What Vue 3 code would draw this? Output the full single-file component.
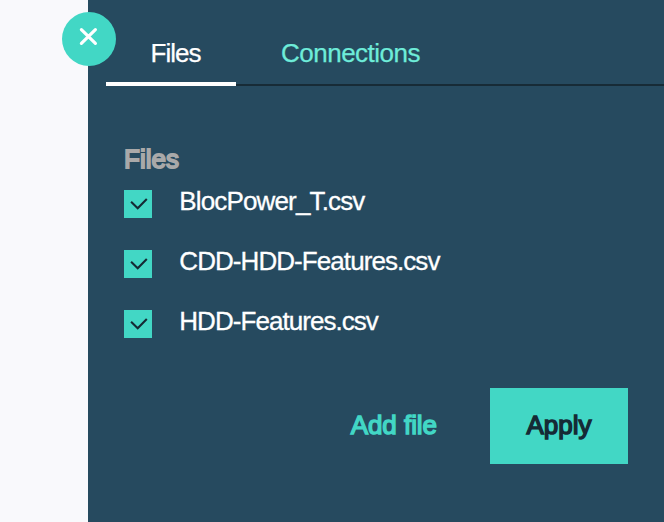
<script setup>
import { ref } from 'vue'

const tabs = ['Files', 'Connections']
const active = ref('Files')
const files = ref([
  { name: 'BlocPower_T.csv', checked: true, cls: 'bloc' },
  { name: 'CDD-HDD-Features.csv', checked: true, cls: 'cdd' },
  { name: 'HDD-Features.csv', checked: true, cls: 'hdd' },
])
</script>

<template>
  <div class="page">
    <aside class="panel">
      <button class="close" aria-label="Close">
        <svg width="54" height="54" viewBox="0 0 54 54">
          <path d="M19.4 17.6 L33.4 31.4 M33.4 17.6 L19.4 31.4" fill="none" stroke="#fff" stroke-width="3.2" stroke-linecap="round" />
        </svg>
      </button>
      <nav class="tabs">
        <button
          v-for="tab in tabs"
          :key="tab"
          class="tab"
          :class="[tab.toLowerCase(), { active: tab === active }]"
          @click="active = tab"
        ><span>{{ tab }}</span></button>
      </nav>
      <section class="content">
        <h2>Files</h2>
        <ul>
          <li v-for="file in files" :key="file.name" @click="file.checked = !file.checked">
            <span class="box">
              <svg v-if="file.checked" width="28" height="28" viewBox="0 0 28 28">
                <path d="M7.1 11.8 L13.7 18.2 L22.8 9.1" fill="none" stroke="#152a35" stroke-width="2.1" />
              </svg>
            </span>
            <span class="name" :class="file.cls">{{ file.name }}</span>
          </li>
        </ul>
        <div class="actions">
          <button class="add"><span>Add file</span></button>
          <button class="apply"><span>Apply</span></button>
        </div>
      </section>
    </aside>
  </div>
</template>

<style>
body { margin: 0; }
</style>

<style scoped>
.page {
  box-sizing: border-box;
  height: 522px;
  padding-left: 88px;
  background: #f9f9fc;
  overflow: hidden;
  font-family: "Liberation Sans", Helvetica, Arial, sans-serif;
  font-size: 26px;
  line-height: 30px;
}
.panel {
  position: relative;
  box-sizing: border-box;
  height: 522px;
  padding-left: 18px;
  background: #264a5f;
}
button {
  margin: 0;
  padding: 0;
  border: 0;
  background: none;
  font: inherit;
  white-space: nowrap;
}
.close {
  position: absolute;
  left: -26px;
  top: 12px;
  width: 54px;
  height: 54px;
  border-radius: 50%;
  background: #42d7c5;
}
.close svg { display: block; }
.tabs {
  display: flex;
  box-sizing: border-box;
  height: 86px;
  box-shadow: inset 0 -2px #172b36;
}
.tab {
  display: flex;
  box-sizing: border-box;
  height: 86px;
  padding-top: 38px;
  color: #6eecd9;
  -webkit-text-stroke: 0.25px currentColor;
}
.tab.active { color: #fff; border-bottom: 4px solid #fff; }
.tab.files { width: 130px; padding-left: 44.5px; letter-spacing: -0.95px; }
.tab.connections { padding-left: 45px; letter-spacing: -0.5px; }
.content { padding: 58px 36px 0 18px; }
h2 {
  margin: 0;
  font-size: 26px;
  line-height: 30px;
  font-weight: 400;
  letter-spacing: 0;
  color: #a9a9a9;
  -webkit-text-stroke: 1.8px currentColor;
}
ul {
  display: grid;
  gap: 32px;
  margin: 16px 0 0;
  padding: 0;
  list-style: none;
}
li {
  display: flex;
  gap: 27.3px;
  height: 28px;
}
.box { width: 28px; height: 28px; background: #42d7c5; }
.box svg { display: block; }
.name {
  margin-top: -4px;
  color: #fff;
  white-space: nowrap;
  -webkit-text-stroke: 0.3px currentColor;
}
.bloc { letter-spacing: -0.85px; }
.cdd { letter-spacing: -0.93px; }
.hdd { letter-spacing: -0.95px; }
.actions {
  display: flex;
  justify-content: flex-end;
  align-items: center;
  gap: 53px;
  margin-top: 50px;
  -webkit-text-stroke: 1.4px currentColor;
}
.actions span { display: block; margin-top: -2px; }
.add { color: #42d7c5; letter-spacing: -0.05px; }
.apply {
  width: 138px;
  height: 76px;
  background: #42d7c5;
  color: #152a35;
}
</style>
